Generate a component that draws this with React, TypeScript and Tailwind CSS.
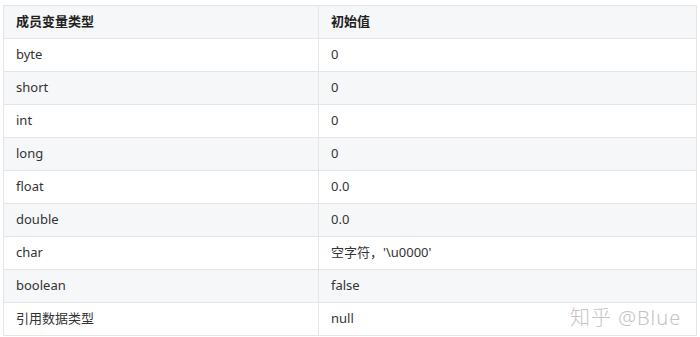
import React from "react"

const rows: [string, string][] = [
    ["byte", "0"],
    ["short", "0"],
    ["int", "0"],
    ["long", "0"],
    ["float", "0.0"],
    ["double", "0.0"],
    ["char", "空字符，'\\u0000'"],
    ["boolean", "false"],
    ["引用数据类型", "null"],
]

export default function App() {
    return (
        <div
            className="relative w-[700px] h-[337px] bg-white pt-[5px] pl-[3px] text-[#333] text-[13px]"
            style={{ fontFamily: '"Noto Sans", "Noto Sans CJK SC", sans-serif' }}
        >
            <table className="border-collapse w-[694px] table-fixed">
                <colgroup>
                    <col className="w-[315px]" />
                    <col />
                </colgroup>
                <thead>
                    <tr className="bg-[#f6f7f9] h-[33px]">
                        <th className="border border-[#e3e5e8] text-left font-bold px-3 text-[#222]">成员变量类型</th>
                        <th className="border border-[#e3e5e8] text-left font-bold px-3 text-[#222]">初始值</th>
                    </tr>
                </thead>
                <tbody>
                    {rows.map(([a, b], i) => (
                        <tr key={a} className={i % 2 === 0 ? "bg-white h-[33px]" : "bg-[#f6f7f9] h-[33px]"}>
                            <td className="border border-[#e3e5e8] px-3">{a}</td>
                            <td className="border border-[#e3e5e8] px-3">{b}</td>
                        </tr>
                    ))}
                </tbody>
            </table>
            <div className="absolute left-[570px] top-[303px] text-[20px] font-light text-[#c4c4c4] tracking-[1px]">
                知乎 @Blue
            </div>
        </div>
    )
}
